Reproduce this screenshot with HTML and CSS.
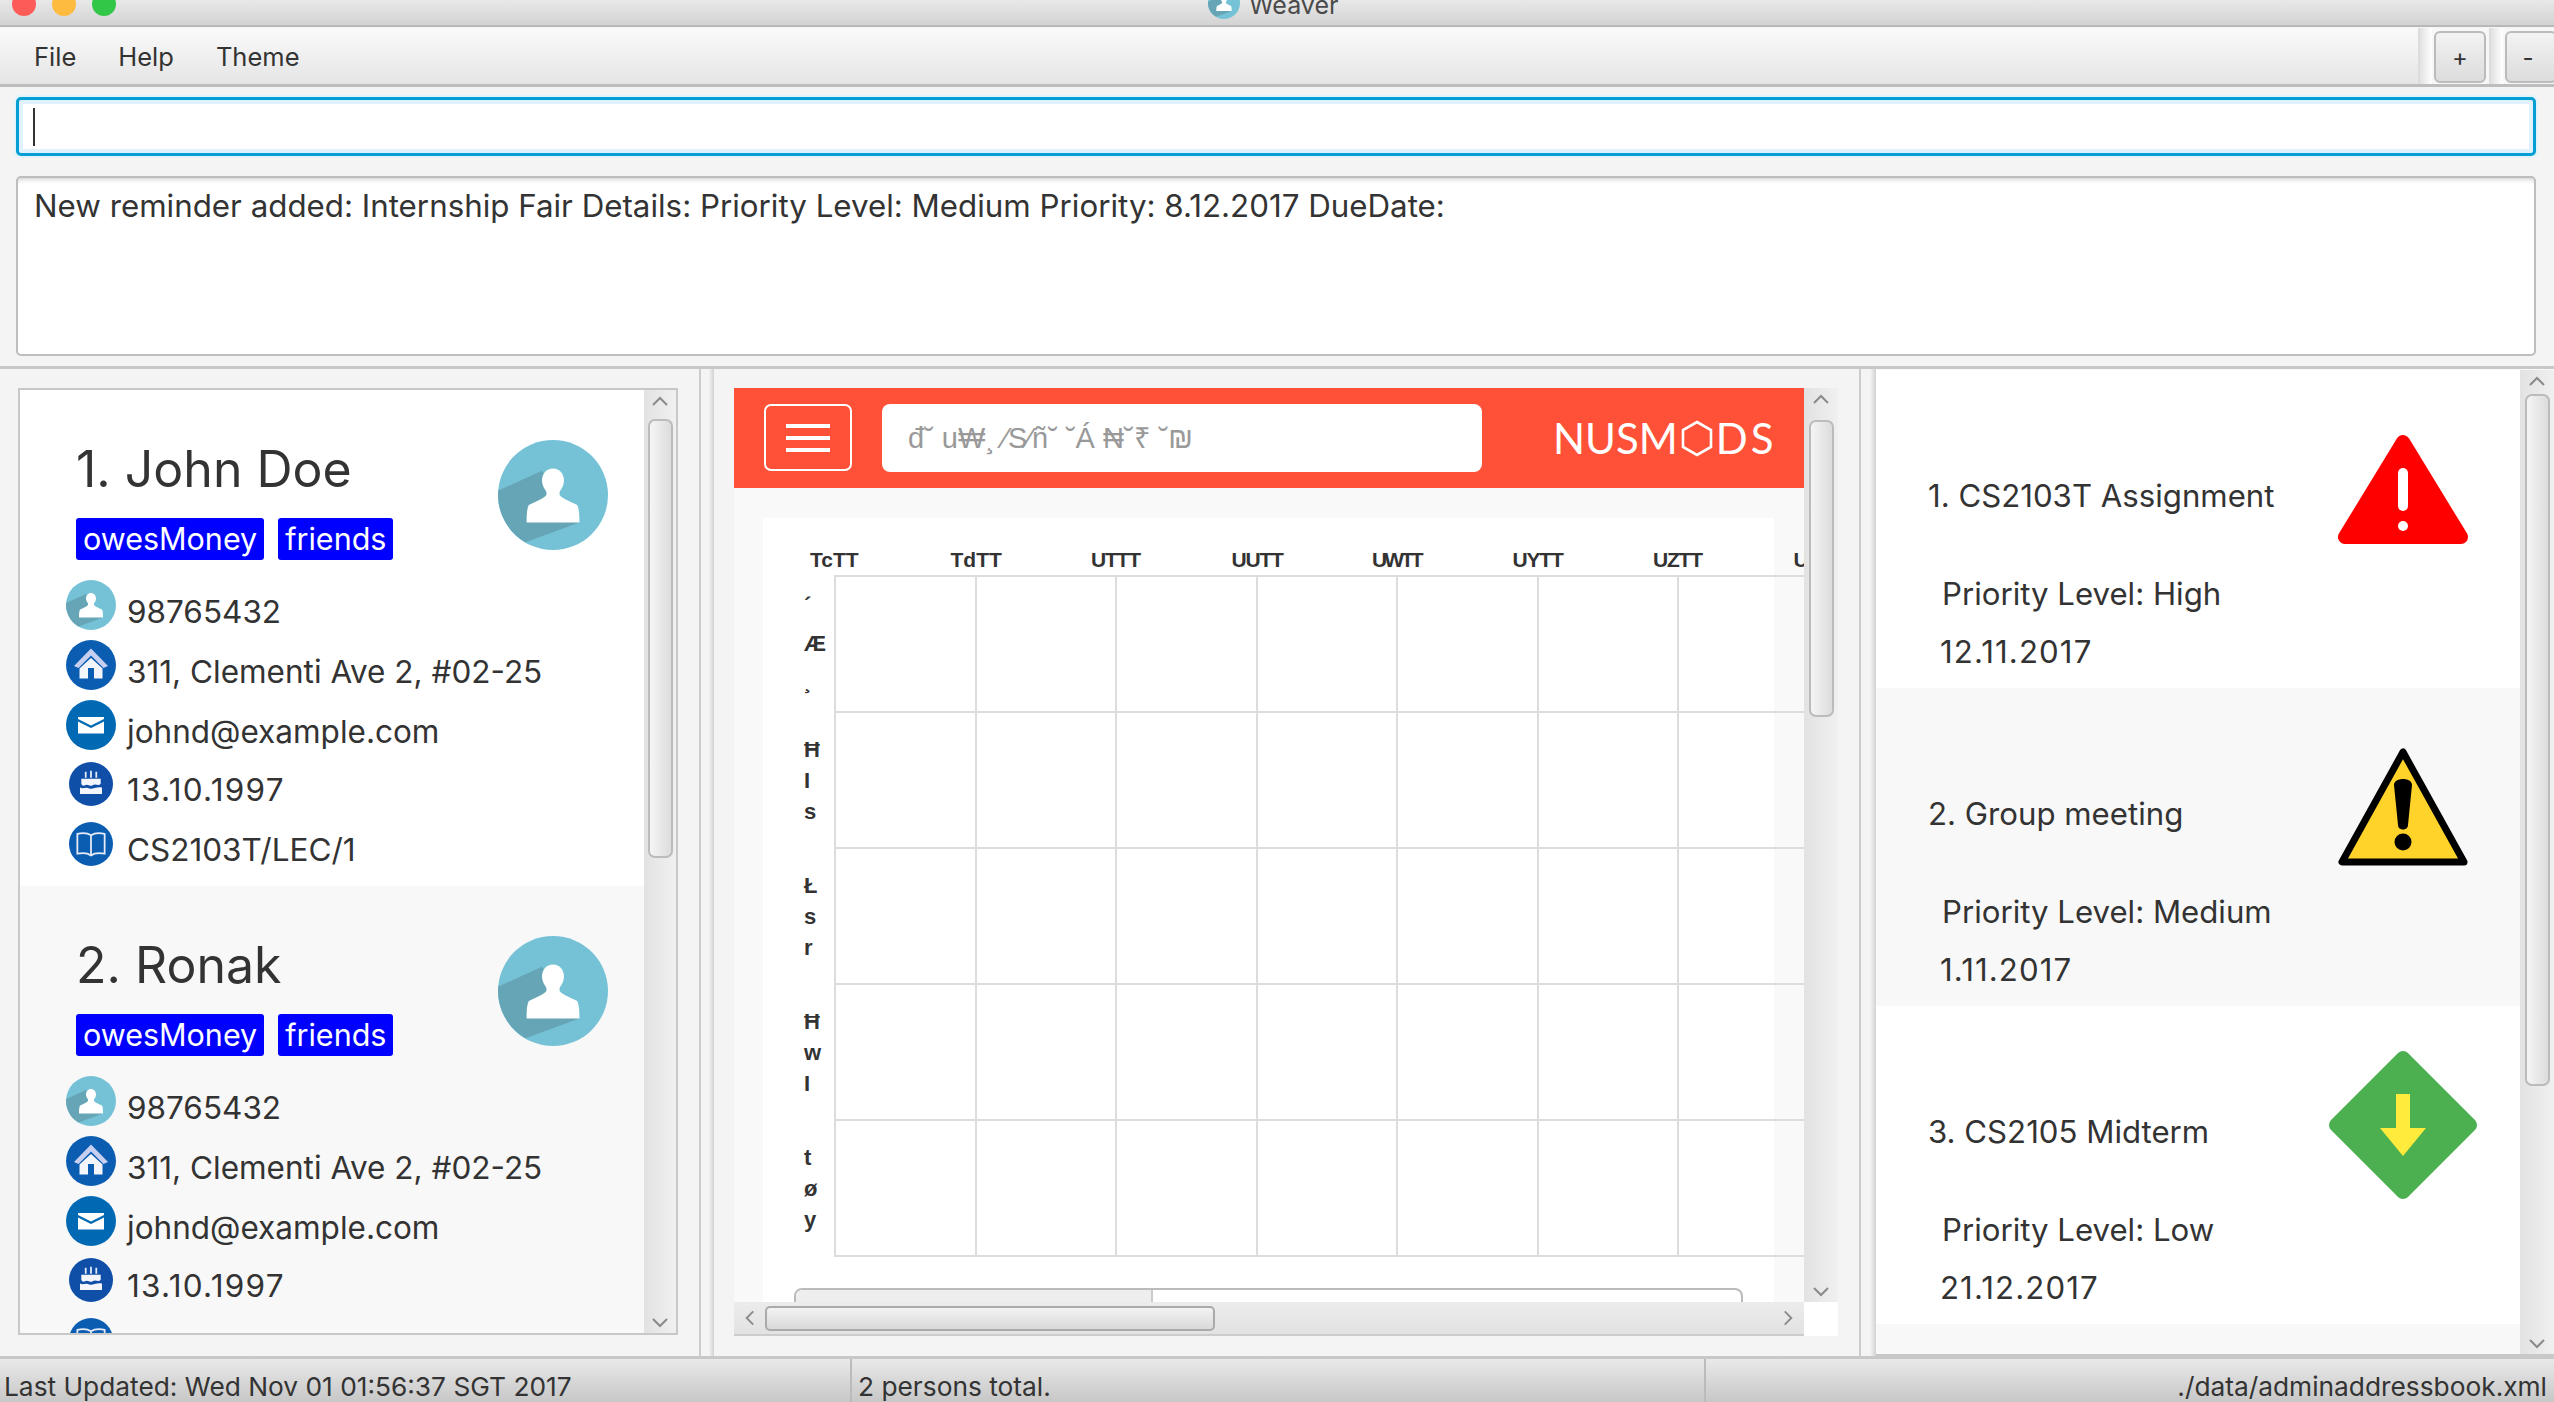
FILE: index.html
```html
<!DOCTYPE html>
<html lang="en">
<head>
    <meta charset="UTF-8">
    <title>Weaver</title>
    <link rel="stylesheet" href="styles.css">
</head>
<body>

<svg class="defs" width="0" height="0">
  <symbol id="i-person" viewBox="0 0 100 100">
    <circle cx="50" cy="50" r="50" fill="#75c2d7"/>
    <path d="M0.2 46 L40 28 L74 75 L25 93 A50 50 0 0 1 0.2 46Z" fill="#65a5b5"/>
    <path d="M50 26C56 26 60 31 60 37C60 41 58 44 56 47L56 50C58 53 66 56 72 59C74 63 74 70 74 75L26 75C26 70 26 63 28 59C34 56 42 53 44 50L44 47C42 44 40 41 40 37C40 31 44 26 50 26Z" fill="#fff"/>
  </symbol>
  <symbol id="i-home" viewBox="0 0 100 100">
    <circle cx="50" cy="50" r="50" fill="#0b5db2"/>
    <path d="M50 17L84 52L75 56L50 31L25 56L16 52Z" fill="#c7cff0"/>
    <path d="M50 36L73 57V77H56V56H44V77H27V57Z" fill="#f5f6fc"/>
  </symbol>
  <symbol id="i-mail" viewBox="0 0 100 100">
    <circle cx="50" cy="50" r="50" fill="#0069b4"/>
    <path d="M24 34H76V38L50 51L24 38Z" fill="#fff"/>
    <path d="M24 43L50 56L76 43V67H24Z" fill="#fff"/>
  </symbol>
  <symbol id="i-cake" viewBox="0 0 100 100">
    <circle cx="50" cy="50" r="50" fill="#0f4fa8"/>
    <path d="M38 22V36M50 20V36M62 22V36" stroke="#e8ecf8" stroke-width="4"/>
    <path d="M28 38H72V50C66 56 60 48 54 53C48 57 42 48 36 53C32 55 30 53 28 50Z" fill="#f5f6fc"/>
    <path d="M25 58C32 62 38 56 46 60C54 63 60 56 75 58V73H25Z" fill="#f5f6fc"/>
  </symbol>
  <symbol id="i-book" viewBox="0 0 100 100">
    <circle cx="50" cy="50" r="50" fill="#0b5db2"/>
    <path d="M50 30C42 25 28 25 19 27V72C30 70 42 70 50 76C58 70 70 70 81 72V27C72 25 58 25 50 30V76" fill="none" stroke="#e8ecf8" stroke-width="4"/>
  </symbol>
  <symbol id="chev" viewBox="0 0 16 10">
    <path d="M1 9L8 2L15 9" fill="none" stroke="#8a8a8a" stroke-width="2"/>
  </symbol>
</svg>

<div class="window">

  <!-- Title bar -->
  <div class="titlebar">
    <span class="light red"></span>
    <span class="light yellow"></span>
    <span class="light green"></span>
    <svg class="title-icon"><use href="#i-person"/></svg>
    <span class="title-text">Weaver</span>
  </div>

  <!-- Menu bar -->
  <div class="menubar">
    <div class="menu">
      <span>File</span>
      <span>Help</span>
      <span>Theme</span>
    </div>
    <div class="tools">
      <div class="tool-sep"></div>
      <button class="tool-btn">+</button>
      <div class="tool-sep"></div>
      <button class="tool-btn">-</button>
    </div>
  </div>

  <!-- Command box and result -->
  <div class="top-pane">
    <div class="command-box"><div class="caret"></div></div>
    <div class="result-box">New reminder added: Internship Fair Details: Priority Level: Medium Priority: 8.12.2017 DueDate:</div>
  </div>

  <div class="main">

    <!-- People -->
    <div class="left-pane">
      <div class="list-box">
        <div class="list-scroll">

          <div class="person-card">
            <div class="person-head">
              <div>
                <div class="person-name">1. John Doe</div>
                <div class="tags"><span class="tag">owesMoney</span><span class="tag">friends</span></div>
              </div>
              <svg class="avatar"><use href="#i-person"/></svg>
            </div>
            <div class="info-row"><svg class="info-icon"><use href="#i-person"/></svg><span>98765432</span></div>
            <div class="info-row"><svg class="info-icon"><use href="#i-home"/></svg><span>311, Clementi Ave 2, #02-25</span></div>
            <div class="info-row"><svg class="info-icon"><use href="#i-mail"/></svg><span>johnd@example.com</span></div>
            <div class="info-row small"><svg class="info-icon"><use href="#i-cake"/></svg><span class="birthday">13.10.1997</span></div>
            <div class="info-row small"><svg class="info-icon"><use href="#i-book"/></svg><span>CS2103T/LEC/1</span></div>
          </div>

          <div class="person-card alt">
            <div class="person-head">
              <div>
                <div class="person-name">2. Ronak</div>
                <div class="tags"><span class="tag">owesMoney</span><span class="tag">friends</span></div>
              </div>
              <svg class="avatar"><use href="#i-person"/></svg>
            </div>
            <div class="info-row"><svg class="info-icon"><use href="#i-person"/></svg><span>98765432</span></div>
            <div class="info-row"><svg class="info-icon"><use href="#i-home"/></svg><span>311, Clementi Ave 2, #02-25</span></div>
            <div class="info-row"><svg class="info-icon"><use href="#i-mail"/></svg><span>johnd@example.com</span></div>
            <div class="info-row small"><svg class="info-icon"><use href="#i-cake"/></svg><span class="birthday">13.10.1997</span></div>
            <div class="info-row small"><svg class="info-icon"><use href="#i-book"/></svg><span>CS2103T/LEC/1</span></div>
          </div>

        </div>
        <div class="vbar">
          <svg class="chev"><use href="#chev"/></svg>
          <div class="thumb thumb-people"></div>
          <svg class="chev down"><use href="#chev"/></svg>
        </div>
      </div>
    </div>

    <div class="splitter"></div>

    <!-- Browser -->
    <div class="mid-pane">
      <div class="browser">
        <div class="webview">
          <div class="nm-header">
            <div class="nm-menu"><i></i><i></i><i></i></div>
            <div class="nm-search">đ˘ u₩¸ ⁄S⁄ñ˘ ˘Á ₦˘₹ ˘₪</div>
            <div class="nm-logo">
              <span>NUSM</span>
              <svg class="nm-hex" viewBox="0 0 32 37"><path d="M16 2L30 10V27L16 35L2 27V10Z" fill="none" stroke="#fff" stroke-width="2.6"/></svg>
              <span class="nm-logo-end">DS</span>
            </div>
          </div>
          <div class="nm-body">
            <div class="timetable">
              <div class="tt-days">
                <span>TcTT</span><span>TdTT</span><span class="narrow">UTTT</span><span class="narrow">UUTT</span><span class="tight">UWTT</span><span class="narrow">UYTT</span><span class="narrow">UZTT</span><span>UaTT</span>
              </div>
              <table class="tt-grid">
                <tr><th class="first">´<br>Æ<br>¸</th><td></td><td></td><td></td><td></td><td></td><td></td><td></td></tr>
                <tr><th>Ħ<br>I<br>s</th><td></td><td></td><td></td><td></td><td></td><td></td><td></td></tr>
                <tr><th>Ł<br>s<br>r</th><td></td><td></td><td></td><td></td><td></td><td></td><td></td></tr>
                <tr><th>Ħ<br>w<br>I</th><td></td><td></td><td></td><td></td><td></td><td></td><td></td></tr>
                <tr><th>t<br>ø<br>y</th><td></td><td></td><td></td><td></td><td></td><td></td><td></td></tr>
              </table>
              <div class="page-scroll"><div class="page-scroll-fill"></div></div>
            </div>
          </div>
        </div>
        <div class="vbar web">
          <svg class="chev"><use href="#chev"/></svg>
          <div class="thumb thumb-web"></div>
          <svg class="chev down"><use href="#chev"/></svg>
        </div>
        <div class="hbar">
          <svg class="chev-h left"><use href="#chev"/></svg>
          <div class="hthumb"></div>
          <svg class="chev-h right"><use href="#chev"/></svg>
        </div>
        <div class="corner"></div>
      </div>
    </div>

    <div class="splitter"></div>

    <!-- Reminders -->
    <div class="right-pane">
      <div class="reminder-list">

        <div class="reminder">
          <div class="reminder-head">
            <div class="reminder-title">1. CS2103T Assignment</div>
            <div class="reminder-icon">
              <svg width="130" height="111" viewBox="0 0 130 111">
                <path d="M65 8L7 103H123Z" fill="#f00" stroke="#f00" stroke-width="14" stroke-linejoin="round"/>
                <path d="M65 39V72" stroke="#fff" stroke-width="10" stroke-linecap="round"/>
                <circle cx="65" cy="92" r="5" fill="#fff"/>
              </svg>
            </div>
          </div>
          <div class="reminder-priority">Priority Level: High</div>
          <div class="reminder-date">12.11.2017</div>
        </div>

        <div class="reminder alt">
          <div class="reminder-head">
            <div class="reminder-title">2. Group meeting</div>
            <div class="reminder-icon">
              <svg width="130" height="120" viewBox="0 0 130 120">
                <path d="M65 5L4 115H126Z" fill="#ffd32a" stroke="#000" stroke-width="7" stroke-linejoin="round"/>
                <path d="M56 38C56 30 74 30 74 38L70 78C70 84 60 84 60 78Z" fill="#000"/>
                <circle cx="65" cy="95" r="8.5" fill="#000"/>
              </svg>
            </div>
          </div>
          <div class="reminder-priority">Priority Level: Medium</div>
          <div class="reminder-date">1.11.2017</div>
        </div>

        <div class="reminder">
          <div class="reminder-head">
            <div class="reminder-title">3. CS2105 Midterm</div>
            <div class="reminder-icon">
              <svg width="150" height="150" viewBox="0 0 150 150">
                <path d="M75 8L142 75L75 142L8 75Z" fill="#4caf50" stroke="#4caf50" stroke-width="14" stroke-linejoin="round"/>
                <path d="M68 44H82V78H98L75 106L52 78H68Z" fill="#ffeb3b"/>
              </svg>
            </div>
          </div>
          <div class="reminder-priority">Priority Level: Low</div>
          <div class="reminder-date">21.12.2017</div>
        </div>

        <div class="reminder alt"></div>
      </div>
      <div class="vbar reminders">
        <svg class="chev"><use href="#chev"/></svg>
        <div class="thumb thumb-reminders"></div>
        <svg class="chev down"><use href="#chev"/></svg>
      </div>
    </div>

  </div>

  <!-- Status bar -->
  <div class="statusbar">
    <div class="status-cell">Last Updated: Wed Nov 01 01:56:37 SGT 2017</div>
    <div class="status-cell mid">2 persons total.</div>
    <div class="status-cell end">./data/adminaddressbook.xml</div>
  </div>

</div>

</body>
</html>
```

FILE: styles.css
```css
/* Global */
html, body { margin: 0; padding: 0; }
body { font-family: Inter, "Noto Sans", sans-serif; color: #333; background: #f4f4f4; }
.defs { position: absolute; }
.window { width: 2554px; height: 1402px; display: flex; flex-direction: column; overflow: hidden; }

/* Title bar */
.titlebar {
    height: 25px;
    flex: none;
    display: flex;
    align-items: flex-start;
    padding-left: 12px;
    background: linear-gradient(#e8e8e8, #d3d3d3);
    border-bottom: 2px solid #b8b8b8;
}
.light { width: 24px; height: 24px; margin: -8px 16px 0 0; border-radius: 50%; }
.red { background: #fc5b57; }
.yellow { background: #fdbc40; }
.green { background: #33c748; }
.title-icon { width: 32px; height: 32px; margin: -13px 0 0 1076px; }
.title-text { margin: -11px 0 0 9px; font-size: 25px; line-height: 32px; color: #4a4a4a; }

/* Menu bar */
.menubar {
    height: 56px;
    flex: none;
    display: flex;
    justify-content: space-between;
    margin-top: 1px;
    background: linear-gradient(#fafafa, #e5e5e5);
    border-bottom: 3px solid #bdbdbd;
}
.menu { display: flex; gap: 42px; padding-left: 34px; font-size: 25.5px; line-height: 58px; }
.tools { display: flex; background: #f7f7f7; }
.tool-sep { width: 12px; margin-right: 2px; border-left: 2px solid #ddd; background: linear-gradient(to right, #e2e2e2, #fff); }
.tool-btn {
    width: 52px;
    height: 52px;
    flex: none;
    margin: 3px 3px 0 0;
    padding: 0;
    border: 2px solid #bbb;
    border-radius: 6px;
    background: linear-gradient(#f3f3f3, #dcdcdc);
    font-family: Inter, sans-serif;
    font-size: 24px;
    color: #333;
}
.tool-btn:last-child { margin-right: -3px; padding-right: 6px; }

/* Command box and result */
.top-pane {
    height: 282px;
    flex: none;
    box-sizing: border-box;
    padding: 10px 18px 0 16px;
    border-bottom: 3px solid #c8c8c8;
}
.command-box {
    height: 59px;
    box-sizing: border-box;
    padding: 8px 0 0 14px;
    background: #fff;
    border: 3px solid #039ed3;
    border-radius: 5px;
    box-shadow: 0 0 0 2px #e3f3fa, inset 0 0 0 4px #dff1fa;
}
.caret { width: 2px; height: 38px; background: #333; }
.result-box {
    height: 180px;
    box-sizing: border-box;
    margin-top: 20px;
    padding: 8px 16px;
    background: #fff;
    border: 2px solid #bdbdbd;
    border-radius: 5px;
    box-shadow: inset 0 6px 6px -6px #bbb;
    font-size: 31.3px;
    line-height: 40px;
}

/* Panes */
.main { flex: 1; display: grid; grid-template-columns: 699px 15px 1145px 17px 678px; min-height: 0; }
.splitter { border-left: 2px solid #ccc; background: linear-gradient(to right, #f4f4f4 60%, #d2d2d2); }
.left-pane { padding: 19px 21px 21px 18px; min-height: 0; }
.list-box { height: 100%; box-sizing: border-box; display: flex; border: 2px solid #c8c8c8; background: #fff; }
.list-scroll { flex: 1; overflow: hidden; }

/* Person card */
.person-card { height: 496px; box-sizing: border-box; padding: 48px 36px 6px 46px; background: #fff; }
.person-card.alt { background: #f8f8f8; }
.person-head { height: 122px; display: flex; justify-content: space-between; margin-bottom: 20px; }
.person-name { margin-left: 10px; font-size: 50px; line-height: 62px; }
.tags { display: flex; gap: 14px; margin: 18px 0 0 10px; }
.tag {
    height: 42px;
    padding: 0 7px;
    background: #00f;
    border-radius: 3px;
    color: #fff;
    font-size: 30.5px;
    line-height: 42px;
}
.avatar { width: 110px; height: 110px; margin-top: 2px; }
.info-row { height: 60px; display: flex; gap: 11px; font-size: 31.5px; line-height: 64px; }
.info-icon { width: 50px; height: 50px; flex: none; }
.info-row.small { line-height: 60px; }
.info-row.small .info-icon { width: 44px; height: 44px; margin: 2px 3px 0; }
.birthday { letter-spacing: 1.25px; }

/* Scroll bars */
.vbar {
    width: 32px;
    flex: none;
    box-sizing: border-box;
    display: flex;
    flex-direction: column;
    align-items: center;
    padding: 6px 0 5px;
    background: linear-gradient(to right, #e2e2e2, #f0f0f0);
}
.chev { width: 16px; height: 10px; flex: none; }
.chev.down { margin-top: auto; transform: rotate(180deg); }
.thumb {
    width: 25px;
    flex: none;
    box-sizing: border-box;
    border: 2px solid #bbb;
    border-radius: 7px;
    background: linear-gradient(to right, #f5f5f5, #dcdcdc);
}
.thumb-people { height: 439px; margin-top: 13px; }
.thumb-web { height: 297px; margin-top: 16px; }
.thumb-reminders { height: 692px; margin-top: 8px; }

/* Browser */
.mid-pane { padding: 19px 21px 20px 20px; }
.browser { height: 100%; display: grid; grid-template-columns: 1070px 34px; grid-template-rows: 914px 34px; }
.webview { overflow: hidden; background: #f9f9f9; }
.vbar.web { width: 34px; }
.hbar {
    box-sizing: border-box;
    display: flex;
    align-items: center;
    padding: 0 8px;
    background: linear-gradient(#ececec, #e2e2e2);
    border-bottom: 2px solid #ccc;
}
.hthumb {
    width: 450px;
    height: 25px;
    box-sizing: border-box;
    margin-left: 8px;
    border: 2px solid #aaa;
    border-radius: 5px;
    background: linear-gradient(#f3f3f3, #d9d9d9);
}
.chev-h { width: 15px; height: 10px; flex: none; }
.chev-h.left { transform: rotate(-90deg); }
.chev-h.right { margin-left: auto; transform: rotate(90deg); }
.corner { background: #fff; }

/* NUSMods header */
.nm-header { height: 100px; display: flex; align-items: flex-start; background: #ff5138; }
.nm-menu {
    width: 88px;
    height: 67px;
    flex: none;
    box-sizing: border-box;
    display: flex;
    flex-direction: column;
    justify-content: center;
    align-items: center;
    gap: 8px;
    margin: 16px 30px 0;
    border: 2px solid #fff;
    border-radius: 7px;
}
.nm-menu i { width: 44px; height: 4px; background: #fff; }
.nm-search {
    width: 600px;
    height: 68px;
    flex: none;
    box-sizing: border-box;
    margin-top: 16px;
    padding-left: 26px;
    background: #fff;
    border-radius: 8px;
    color: #999;
    font-family: "Liberation Sans", sans-serif;
    font-size: 29px;
    line-height: 68px;
    white-space: nowrap;
}
.nm-logo {
    display: flex;
    align-items: center;
    gap: 3px;
    margin: 31px 0 0 71px;
    color: #fff;
    font-family: Lato, sans-serif;
    font-weight: 400;
    font-size: 42px;
    line-height: 38px;
}
.nm-logo-end { letter-spacing: 3px; }
.nm-hex { width: 32px; height: 37px; }

/* Timetable */
.nm-body { padding: 30px 30px 0 29px; }
.timetable { width: 1011px; height: 784px; background: #fff; }
.tt-days {
    display: flex;
    height: 57px;
    align-items: flex-end;
    padding-left: 47px;
    font-family: "Liberation Sans", sans-serif;
    font-weight: bold;
    font-size: 21px;
    line-height: 30px;
}
.tt-days span { width: 140.5px; flex: none; }
.tt-days .narrow { letter-spacing: -1.2px; }
.tt-days .tight { letter-spacing: -3px; }
.tt-grid { width: 1055.5px; table-layout: fixed; border-collapse: collapse; }
.tt-grid th {
    width: 72px;
    box-sizing: border-box;
    padding: 0 0 0 41px;
    text-align: left;
    font-family: "Liberation Sans", sans-serif;
    font-size: 22px;
    line-height: 31px;
}
.tt-grid th.first { line-height: 38px; }
.tt-grid td { width: 140.5px; height: 136px; padding: 0; box-sizing: border-box; border: 2px solid #ddd; }
.page-scroll {
    width: 949px;
    height: 30px;
    box-sizing: border-box;
    overflow: hidden;
    margin: 31px 0 0 31px;
    border: 2px solid #bbb;
    border-radius: 8px;
}
.page-scroll-fill { width: 355px; height: 100%; background: #eee; border-right: 2px solid #ccc; }

/* Reminders */
.right-pane { display: flex; padding-top: 1px; border-bottom: 2px solid #c8c8c8; min-height: 0; background: #f8f8f8; }
.reminder-list { flex: 1; overflow: hidden; }
.reminder { height: 318px; box-sizing: border-box; padding: 44px 42px 0 52px; background: #fff; font-size: 31.2px; line-height: 57px; }
.reminder.alt { background: #f8f8f8; }
.reminder-head { height: 152px; display: flex; justify-content: space-between; }
.reminder-title { padding-top: 54px; }
.reminder-icon { width: 150px; height: 150px; display: flex; justify-content: center; align-items: center; }
.reminder-priority { margin-left: 14px; }
.reminder-date { margin: 1px 0 0 12px; letter-spacing: 1.1px; }
.vbar.reminders { width: 34px; padding-top: 6px; }

/* Status bar */
.statusbar {
    height: 46px;
    flex: none;
    box-sizing: border-box;
    display: flex;
    background: linear-gradient(#e9e9e9, #c7c7c7);
    border-top: 3px solid #c8c8c8;
    font-size: 26.3px;
    line-height: 56px;
}
.status-cell { width: 850px; box-sizing: border-box; padding-left: 4px; white-space: nowrap; }
.status-cell.mid { width: 854px; padding-left: 6px; border-left: 2px solid #bbb; }
.status-cell.end { width: 850px; padding: 0 7px 0 0; border-left: 2px solid #bbb; text-align: right; }
```
